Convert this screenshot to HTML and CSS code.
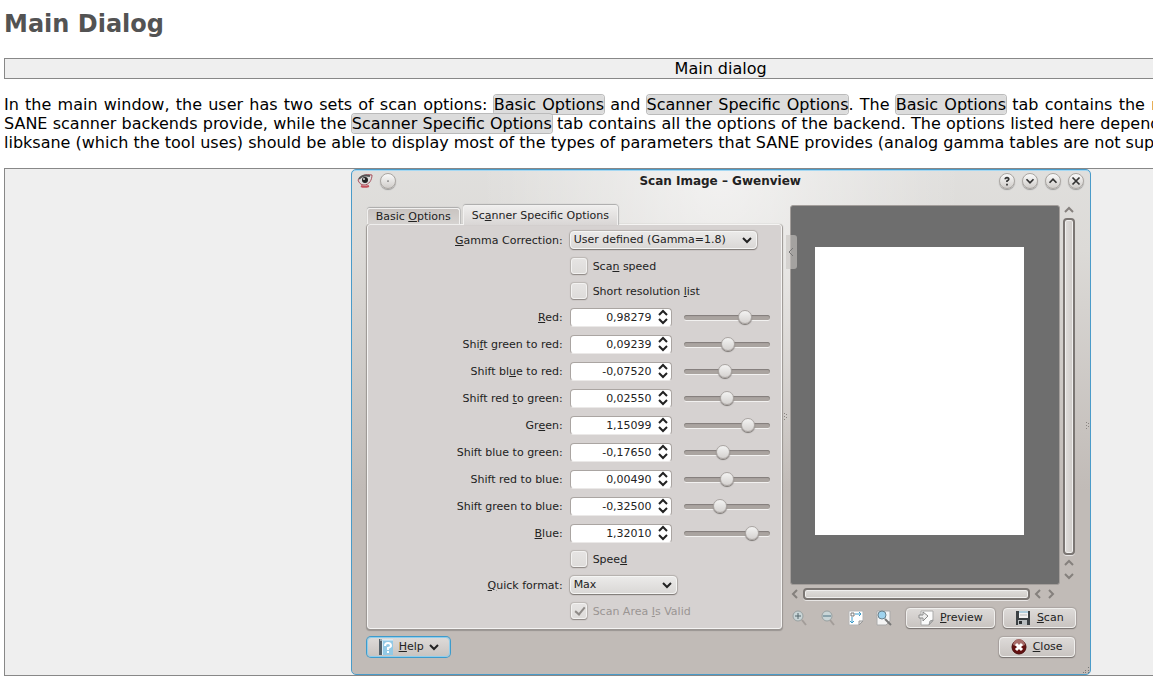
FILE: index.html
```html
<!DOCTYPE html>
<html lang="en">
<head>
    <meta charset="UTF-8">
    <meta name="viewport" content="width=device-width, initial-scale=1.0">
    <title>Main Dialog</title>
    <link rel="stylesheet" href="styles.css">
</head>
<body>

<div class="page">
    <h1>Main Dialog</h1>

    <div class="box">Main dialog</div>

    <p>In the main window, the user has two sets of scan options: <span class="gui">Basic Options</span> and <span class="gui">Scanner Specific Options</span>. The <span class="gui">Basic Options</span> tab contains the most common parameters that the SANE scanner backends provide, while the <span class="gui">Scanner Specific Options</span> tab contains all the options of the backend. The options listed here depend on the driver support for scanner: libksane (which the tool uses) should be able to display most of the types of parameters that SANE provides (analog gamma tables are not supported).</p>

    <div class="box">
        <div class="dialog">
            <!-- Title bar -->
            <div class="titlebar">
                <div class="titlebar-side">
                    <svg class="eye" viewBox="0 0 16 14">
                        <path d="M1 6C4 1 9 0 15 1c0 5-3 10-8 10-3 0-5-2-6-5z" fill="#ddd" stroke="#a8505c"/>
                        <path d="M2 5C5 1 9 1 13 2" stroke="#555" stroke-width="2"/>
                        <circle cx="8" cy="6" r="3" fill="#222"/>
                        <circle cx="7" cy="5" r="1" fill="#ddd"/>
                        <path d="M4 12c2 1 5 1 8 0" stroke="#c4505c" stroke-width="2"/>
                    </svg>
                    <button class="round" aria-label="On all desktops"><svg viewBox="0 0 16 16"><circle cx="8" cy="8" r="1" fill="#777" stroke="none"/></svg></button>
                </div>
                <div class="title">Scan Image – Gwenview</div>
                <div class="titlebar-side right">
                    <button class="round" aria-label="Help"><svg viewBox="0 0 16 16"><path d="M6 6q0-2 2-2t2 2q0 1-2 2v1M8 11v2"/></svg></button>
                    <button class="round" aria-label="Minimize"><svg viewBox="0 0 16 16"><path d="M4 6l4 4 4-4"/></svg></button>
                    <button class="round" aria-label="Maximize"><svg viewBox="0 0 16 16"><path d="M4 10l4-4 4 4"/></svg></button>
                    <button class="round" aria-label="Close window"><svg viewBox="0 0 16 16"><path d="M4 4l8 8M12 4l-8 8"/></svg></button>
                </div>
            </div>

            <div class="content">
                <!-- Options -->
                <div class="options">
                    <div class="tabs">
                        <button class="tab">Basic <u>O</u>ptions</button>
                        <button class="tab active">Sc<u>a</u>nner Specific Options</button>
                    </div>
                    <form class="panel">
                        <label for="gamma"><u>G</u>amma Correction:</label>
                        <div class="combo wide">
                            <select id="gamma"><option>User defined (Gamma=1.8)</option></select>
                            <svg class="arrow" viewBox="0 0 10 10"><path d="M1 3l4 4 4-4"/></svg>
                        </div>

                        <label class="check"><input type="checkbox"><span>Sca<u>n</u> speed</span></label>
                        <label class="check"><input type="checkbox"><span>Short resolution <u>l</u>ist</span></label>

                        <label for="red"><u>R</u>ed:</label>
                        <div class="value">
                            <div class="spin"><input type="text" id="red" value="0,98279"><svg viewBox="0 0 10 16"><path d="M1 6l4-4 4 4M1 10l4 4 4-4"/></svg></div>
                            <input type="range" aria-label="Red" min="-1.9" max="1.9" step="any" value="0.98279">
                        </div>

                        <label for="green-red">Shi<u>f</u>t green to red:</label>
                        <div class="value">
                            <div class="spin"><input type="text" id="green-red" value="0,09239"><svg viewBox="0 0 10 16"><path d="M1 6l4-4 4 4M1 10l4 4 4-4"/></svg></div>
                            <input type="range" aria-label="Shift green to red" min="-1.9" max="1.9" step="any" value="0.09239">
                        </div>

                        <label for="blue-red">Shift bl<u>u</u>e to red:</label>
                        <div class="value">
                            <div class="spin"><input type="text" id="blue-red" value="-0,07520"><svg viewBox="0 0 10 16"><path d="M1 6l4-4 4 4M1 10l4 4 4-4"/></svg></div>
                            <input type="range" aria-label="Shift blue to red" min="-1.9" max="1.9" step="any" value="-0.0752">
                        </div>

                        <label for="red-green">Shift red <u>t</u>o green:</label>
                        <div class="value">
                            <div class="spin"><input type="text" id="red-green" value="0,02550"><svg viewBox="0 0 10 16"><path d="M1 6l4-4 4 4M1 10l4 4 4-4"/></svg></div>
                            <input type="range" aria-label="Shift red to green" min="-1.9" max="1.9" step="any" value="0.0255">
                        </div>

                        <label for="green">Gr<u>e</u>en:</label>
                        <div class="value">
                            <div class="spin"><input type="text" id="green" value="1,15099"><svg viewBox="0 0 10 16"><path d="M1 6l4-4 4 4M1 10l4 4 4-4"/></svg></div>
                            <input type="range" aria-label="Green" min="-1.9" max="1.9" step="any" value="1.15099">
                        </div>

                        <label for="blue-green">Shift blue to green:</label>
                        <div class="value">
                            <div class="spin"><input type="text" id="blue-green" value="-0,17650"><svg viewBox="0 0 10 16"><path d="M1 6l4-4 4 4M1 10l4 4 4-4"/></svg></div>
                            <input type="range" aria-label="Shift blue to green" min="-1.9" max="1.9" step="any" value="-0.1765">
                        </div>

                        <label for="red-blue">Shift red to blue:</label>
                        <div class="value">
                            <div class="spin"><input type="text" id="red-blue" value="0,00490"><svg viewBox="0 0 10 16"><path d="M1 6l4-4 4 4M1 10l4 4 4-4"/></svg></div>
                            <input type="range" aria-label="Shift red to blue" min="-1.9" max="1.9" step="any" value="0.0049">
                        </div>

                        <label for="green-blue">Shift green to blue:</label>
                        <div class="value">
                            <div class="spin"><input type="text" id="green-blue" value="-0,32500"><svg viewBox="0 0 10 16"><path d="M1 6l4-4 4 4M1 10l4 4 4-4"/></svg></div>
                            <input type="range" aria-label="Shift green to blue" min="-1.9" max="1.9" step="any" value="-0.325">
                        </div>

                        <label for="blue"><u>B</u>lue:</label>
                        <div class="value">
                            <div class="spin"><input type="text" id="blue" value="1,32010"><svg viewBox="0 0 10 16"><path d="M1 6l4-4 4 4M1 10l4 4 4-4"/></svg></div>
                            <input type="range" aria-label="Blue" min="-1.9" max="1.9" step="any" value="1.3201">
                        </div>

                        <label class="check"><input type="checkbox"><span>Spee<u>d</u></span></label>

                        <label for="format"><u>Q</u>uick format:</label>
                        <div class="combo">
                            <select id="format"><option>Max</option></select>
                            <svg class="arrow" viewBox="0 0 10 10"><path d="M1 3l4 4 4-4"/></svg>
                        </div>

                        <label class="check disabled"><input type="checkbox" checked disabled><span>Scan Area <u>I</u>s Valid</span></label>
                    </form>
                </div>

                <div class="splitter"><svg viewBox="0 0 4 8"><path d="M0 0h1v1H0zM0 3h1v1H0zM0 6h1v1H0zM2 1h1v1H2zM2 4h1v1H2z" fill="#8a8581"/></svg></div>

                <!-- Preview -->
                <div class="preview">
                    <div class="viewer">
                        <div class="canvas"><div class="paper"></div></div>
                        <div class="scroll vertical">
                            <button aria-label="Scroll up"><svg viewBox="0 0 10 10"><path d="M1 7l4-4 4 4"/></svg></button>
                            <div class="thumb"></div>
                            <button aria-label="Scroll up"><svg viewBox="0 0 10 10"><path d="M1 7l4-4 4 4"/></svg></button>
                            <button aria-label="Scroll down"><svg viewBox="0 0 10 10"><path d="M1 3l4 4 4-4"/></svg></button>
                        </div>
                        <div class="scroll">
                            <button aria-label="Scroll left"><svg viewBox="0 0 10 10"><path d="M7 1L3 5l4 4"/></svg></button>
                            <div class="thumb"></div>
                            <button aria-label="Scroll left"><svg viewBox="0 0 10 10"><path d="M7 1L3 5l4 4"/></svg></button>
                            <button aria-label="Scroll right"><svg viewBox="0 0 10 10"><path d="M3 1l4 4-4 4"/></svg></button>
                        </div>
                        <button class="collapse" aria-label="Collapse options"><svg viewBox="0 0 10 10"><path d="M7 1L3 5l4 4"/></svg></button>
                    </div>
                    <div class="toolbar">
                        <button class="tool" aria-label="Zoom in">
                            <svg viewBox="0 0 16 16"><path d="M10 10l4 5" stroke="#a39d99" stroke-width="2"/><circle cx="6" cy="6" r="5" fill="#c9d5d7" stroke="#99a1a1"/><path d="M3 6h6M6 3v6" stroke="#53666c"/></svg>
                        </button>
                        <button class="tool" aria-label="Zoom out">
                            <svg viewBox="0 0 16 16"><path d="M10 10l4 5" stroke="#a39d99" stroke-width="2"/><circle cx="7" cy="6" r="5" fill="#c9d5d7" stroke="#99a1a1"/><path d="M3 6h8" stroke="#4a7080"/></svg>
                        </button>
                        <button class="tool" aria-label="Zoom to selection">
                            <svg viewBox="0 0 16 16"><path d="M1 1h14v10l-4 4H1z" fill="#fff" stroke="#b5b5b5"/><path d="M11 15v-4h4z" fill="#ddd" stroke="#999"/><path d="M3 3h3v3H3z" stroke="#777"/><path d="M7 4h6M4 7v6M11 2l2 2-2 2M2 11l2 2 2-2" stroke="#3a9bc9"/></svg>
                        </button>
                        <button class="tool" aria-label="Zoom to fit">
                            <svg viewBox="0 0 16 16"><path d="M1 1h13v10l-4 4H1z" fill="#f4f4f4" stroke="#aaa"/><path d="M9 9l6 6" stroke="#777" stroke-width="2"/><circle cx="6" cy="5" r="4" fill="#9fd3ee" stroke="#68808c"/></svg>
                        </button>
                        <button class="btn push">
                            <svg viewBox="0 0 16 16"><path d="M3 1h12v10l-4 4H3z" fill="#fbfbfb" stroke="#aaa"/><path d="M11 15l1-4 3-1z" fill="#ccc" stroke="#999"/><path d="M1 5h4V2l5 4-5 5V8H1z" fill="#eee" stroke="#888"/></svg>
                            <span><u>P</u>review</span>
                        </button>
                        <button class="btn">
                            <svg viewBox="0 0 16 16"><path d="M1 1h14v14H1z" fill="#3c4144"/><path d="M4 1h9v7H4z" fill="#f2f2f2"/><path d="M4 2h9" stroke="#6faac8"/><path d="M5 5h7" stroke="#bbb"/><path d="M3 10h9v5H3z" fill="#b9bdbf"/><path d="M4 11h3v3H4z" fill="#2b2f31"/></svg>
                            <span><u>S</u>can</span>
                        </button>
                    </div>
                </div>
            </div>

            <!-- Bottom buttons -->
            <div class="footer">
                <button class="btn help">
                    <svg viewBox="0 0 16 16"><path d="M1 1h14v15H1z" fill="#92c9e6"/><path d="M1 0h3v16H1z" fill="#54616a"/><path d="M2 1h13" stroke="#e8f4fa"/><path d="M4 2h1v14H4z" fill="#d9eef8"/><path d="M7 7q0-3 3-3t3 3q0 1-3 2v2M10 12v2" stroke="#fff" stroke-width="2"/></svg>
                    <span><u>H</u>elp</span>
                    <svg class="arrow" viewBox="0 0 10 10"><path d="M1 3l4 4 4-4"/></svg>
                </button>
                <button class="btn">
                    <svg viewBox="0 0 16 16"><circle cx="8" cy="8" r="7" fill="#651010" stroke="#490c0c"/><path d="M2 6a6 6 0 0 1 12 0q-6 3-12 0z" fill="#a76c69"/><path d="M5 5l6 6M11 5l-6 6" stroke="#fff" stroke-width="3"/></svg>
                    <span><u>C</u>lose</span>
                </button>
            </div>
            <svg class="edge" viewBox="0 0 4 8"><path d="M0 0h1v1H0zM0 3h1v1H0zM0 6h1v1H0zM2 1h1v1H2zM2 4h1v1H2z" fill="#8a8581"/></svg>
            <svg class="grip" viewBox="0 0 8 8"><path d="M6 1h1v1H6zM3 4h1v1H3zM6 4h1v1H6zM1 6h1v1H1zM3 6h1v1H3zM6 6h1v1H6z" fill="#777"/></svg>
        </div>
    </div>
</div>

</body>
</html>
```
FILE: styles.css
```css
html {
    overflow: hidden;
}
body {
    margin: 0;
    background-color: #fff;
    color: #000;
    font-family: "DejaVu Sans", sans-serif;
    font-size: 16px;
    line-height: 19px;
}
/* The document is wider than the window */
.page {
    width: 125vw;
    box-sizing: border-box;
    padding: 10px 4px 0;
}
h1 {
    margin: 0 0 20px;
    font-size: 24px;
    line-height: 28px;
    color: #535353;
}
p {
    margin: 16px 0;
    text-align: justify;
}
.box {
    border: 1px solid #888;
    background-color: #efefef;
    text-align: center;
}
.gui {
    background-color: #dcdcdc;
    border-radius: 3px;
    box-shadow: 0 0 0 1px #bbb;
}
.dialog {
    position: relative;
    max-width: 740px;
    box-sizing: border-box;
    margin: 0 auto;
    padding-bottom: 16px;
    border: 1px solid #4a9bc9;
    border-radius: 5px;
    background: radial-gradient(ellipse at 50% 0, rgba(255, 255, 255, 0.6), rgba(255, 255, 255, 0) 240px), linear-gradient(#e0dfdd, #dcdad7 80px, #c1bbb7 320px);
    box-shadow: inset 0 1px #a5d8f2;
    color: #222;
    font-size: 11px;
    line-height: 14px;
    text-align: left;
}
button,
input,
select {
    font: inherit;
    color: inherit;
}
svg {
    display: block;
    fill: none;
}
.titlebar {
    display: flex;
    align-items: center;
    height: 22px;
    padding: 0 6px 0 5px;
}
.titlebar-side {
    display: flex;
    flex: 1;
    align-items: center;
    gap: 7px;
}
.right {
    justify-content: flex-end;
}
.title {
    font-size: 12px;
    font-weight: bold;
}
.eye {
    width: 16px;
    height: 14px;
}
.round {
    width: 16px;
    height: 16px;
    padding: 0;
    border: 1px solid #aaa6a2;
    border-radius: 50%;
    background: linear-gradient(#fafafa, #d0cdca);
    box-shadow: 0 1px 1px #999;
}
.round svg {
    width: 14px;
    height: 14px;
    stroke: #333;
    stroke-width: 2;
}
.content {
    display: flex;
    padding: 13px 14px 0 15px;
}
.options {
    flex: 1;
}
.splitter {
    display: flex;
    align-items: center;
    justify-content: center;
    width: 8px;
}
.splitter svg,
.edge {
    width: 4px;
    height: 8px;
}
.tabs {
    display: flex;
    align-items: flex-end;
    gap: 3px;
    height: 19px;
}
.tab {
    height: 16px;
    padding: 0 8px;
    border: 1px solid #f2f1f0;
    border-bottom: 0;
    border-radius: 3px 3px 0 0;
    background: linear-gradient(#c9c4c1, #d6d3d1);
    box-shadow: 0 -1px 1px #aaa, 1px 0 1px #bbb;
    line-height: 14px;
}
.active {
    z-index: 1;
    height: 20px;
    margin-bottom: -1px;
    background: linear-gradient(#efeeed, #d9d6d5);
    line-height: 18px;
}
.panel {
    display: grid;
    grid-template-columns: 1fr 200px;
    gap: 7px;
    align-items: center;
    padding: 5px 11px 8px;
    border: 1px solid #f5f4f3;
    border-radius: 3px;
    background-color: #d6d2d1;
    box-shadow: 0 1px 1px 1px #9a9592;
}
.panel > label {
    padding-top: 1px;
    text-align: right;
}
.panel > .check {
    grid-column: 2;
    display: flex;
    align-items: center;
    gap: 6px;
    height: 18px;
    padding: 0;
    text-align: left;
}
.check input {
    appearance: none;
    width: 16px;
    height: 16px;
    margin: 0 0 0 1px;
    border: 1px solid #f3f2f1;
    border-radius: 3px;
    background: linear-gradient(#e6e4e3, #dedcda);
    box-shadow: 0 1px 1px #8f8a87, 0 0 1px 1px #bcb7b4;
}
/* Tick mark */
.check input:checked::before {
    content: "";
    display: block;
    width: 4px;
    height: 8px;
    margin: 1px 0 0 5px;
    border: solid #8f8b88;
    border-width: 0 2px 2px 0;
    transform: rotate(40deg);
}
.check span {
    padding-top: 1px;
}
.disabled {
    color: #9a9593;
}
.combo {
    display: flex;
    align-items: center;
    position: relative;
    width: 107px;
    height: 20px;
}
.wide {
    width: 187px;
}
.combo select {
    appearance: none;
    width: 100%;
    height: 18px;
    padding: 0 3px;
    border: 1px solid #f5f5f4;
    border-radius: 4px;
    background: linear-gradient(#ebeae9, #dad8d6);
    box-shadow: 0 1px 1px #7f7a77, 0 0 1px 1px #b3aeab;
}
.arrow {
    width: 10px;
    height: 10px;
    stroke: #222;
    stroke-width: 2;
}
.combo .arrow {
    position: absolute;
    right: 5px;
    pointer-events: none;
}
.value {
    display: flex;
    align-items: center;
    gap: 12px;
    height: 20px;
}
.spin {
    display: flex;
    align-items: center;
    box-sizing: border-box;
    width: 102px;
    height: 19px;
    padding-right: 3px;
    border: 1px solid #aaa5a2;
    border-bottom-color: #ebe9e8;
    border-radius: 4px;
    background-color: #fff;
}
.spin input {
    flex: 1;
    min-width: 0;
    height: 16px;
    padding: 0 6px 0 0;
    border: 0;
    background: none;
    text-align: right;
}
.spin svg {
    width: 10px;
    height: 16px;
    stroke: #222;
    stroke-width: 2;
}
input[type="range"] {
    appearance: none;
    flex: 1;
    min-width: 0;
    height: 18px;
    margin: 0;
    background: none;
}
input[type="range"]::-webkit-slider-runnable-track {
    height: 5px;
    border-radius: 3px;
    background-color: #aaa4a0;
    box-shadow: inset 0 1px 1px #827d7a, 0 1px #f2f1f0;
}
input[type="range"]::-webkit-slider-thumb {
    appearance: none;
    width: 14px;
    height: 14px;
    margin-top: -5px;
    border: 1px solid #aaa5a2;
    border-radius: 50%;
    background: linear-gradient(#f3f3f2, #d5d2d0);
    box-shadow: 0 1px 1px #77726f;
}
.preview {
    display: flex;
    flex-direction: column;
    width: 286px;
}
.viewer {
    position: relative;
    flex: 1;
    display: grid;
    grid-template-columns: 1fr 14px;
    grid-template-rows: 1fr 14px;
    gap: 2px;
}
.canvas {
    display: flex;
    padding: 41px 35px 49px 24px;
    border: 1px solid #a39e9b;
    border-radius: 3px;
    background-color: #6e6e6e;
}
.paper {
    flex: 1;
    background-color: #fff;
}
.scroll {
    display: flex;
    align-items: center;
    gap: 3px;
    padding-right: 4px;
}
.scroll button {
    display: flex;
    width: 10px;
    height: 10px;
    padding: 0;
    border: 0;
    background: none;
}
.scroll svg {
    width: 10px;
    height: 10px;
    stroke: #85807d;
    stroke-width: 2;
}
.thumb {
    flex: 1;
    height: 8px;
    border: 2px solid #7b7673;
    border-radius: 4px;
    background: linear-gradient(#e0dedc, #cfcbc8);
    box-shadow: inset 0 0 0 1px #f0efee, 0 1px #e8e6e5;
}
.vertical {
    flex-direction: column;
    padding: 0 0 4px;
}
.vertical .thumb {
    width: 8px;
    background: linear-gradient(90deg, #e0dedc, #cfcbc8);
}
/* Sits on the left edge of the viewer */
.collapse {
    position: absolute;
    top: 30px;
    left: -4px;
    width: 11px;
    height: 34px;
    padding: 0;
    border: 0;
    border-radius: 0 3px 3px 0;
    background-color: rgba(200, 196, 193, 0.6);
}
.collapse svg {
    width: 10px;
    height: 10px;
    stroke: #777;
}
.toolbar {
    display: flex;
    align-items: center;
    gap: 8px;
    height: 22px;
    margin-top: 6px;
}
.tool {
    width: 20px;
    padding: 0 2px;
    border: 0;
    background: none;
}
.tool svg,
.btn > svg:first-child {
    width: 16px;
    height: 16px;
}
.btn {
    display: flex;
    align-items: center;
    gap: 6px;
    height: 20px;
    padding: 0 11px;
    border: 1px solid #f0efed;
    border-radius: 4px;
    background: linear-gradient(#dddad8, #c9c4c1);
    box-shadow: 0 1px 1px #77726f, 0 0 1px 1px #aaa5a1;
}
.push {
    margin-left: auto;
}
.footer {
    display: flex;
    justify-content: space-between;
    align-items: center;
    height: 22px;
    margin-top: 7px;
    padding: 0 15px;
}
.help {
    gap: 5px;
    padding: 0 10px;
    border-color: #8fcdec;
    box-shadow: 0 0 0 1px #3d9bcc;
}
.edge {
    position: absolute;
    top: 50%;
    right: 0;
}
.grip {
    position: absolute;
    right: 0;
    bottom: 0;
    width: 8px;
    height: 8px;
}
```
